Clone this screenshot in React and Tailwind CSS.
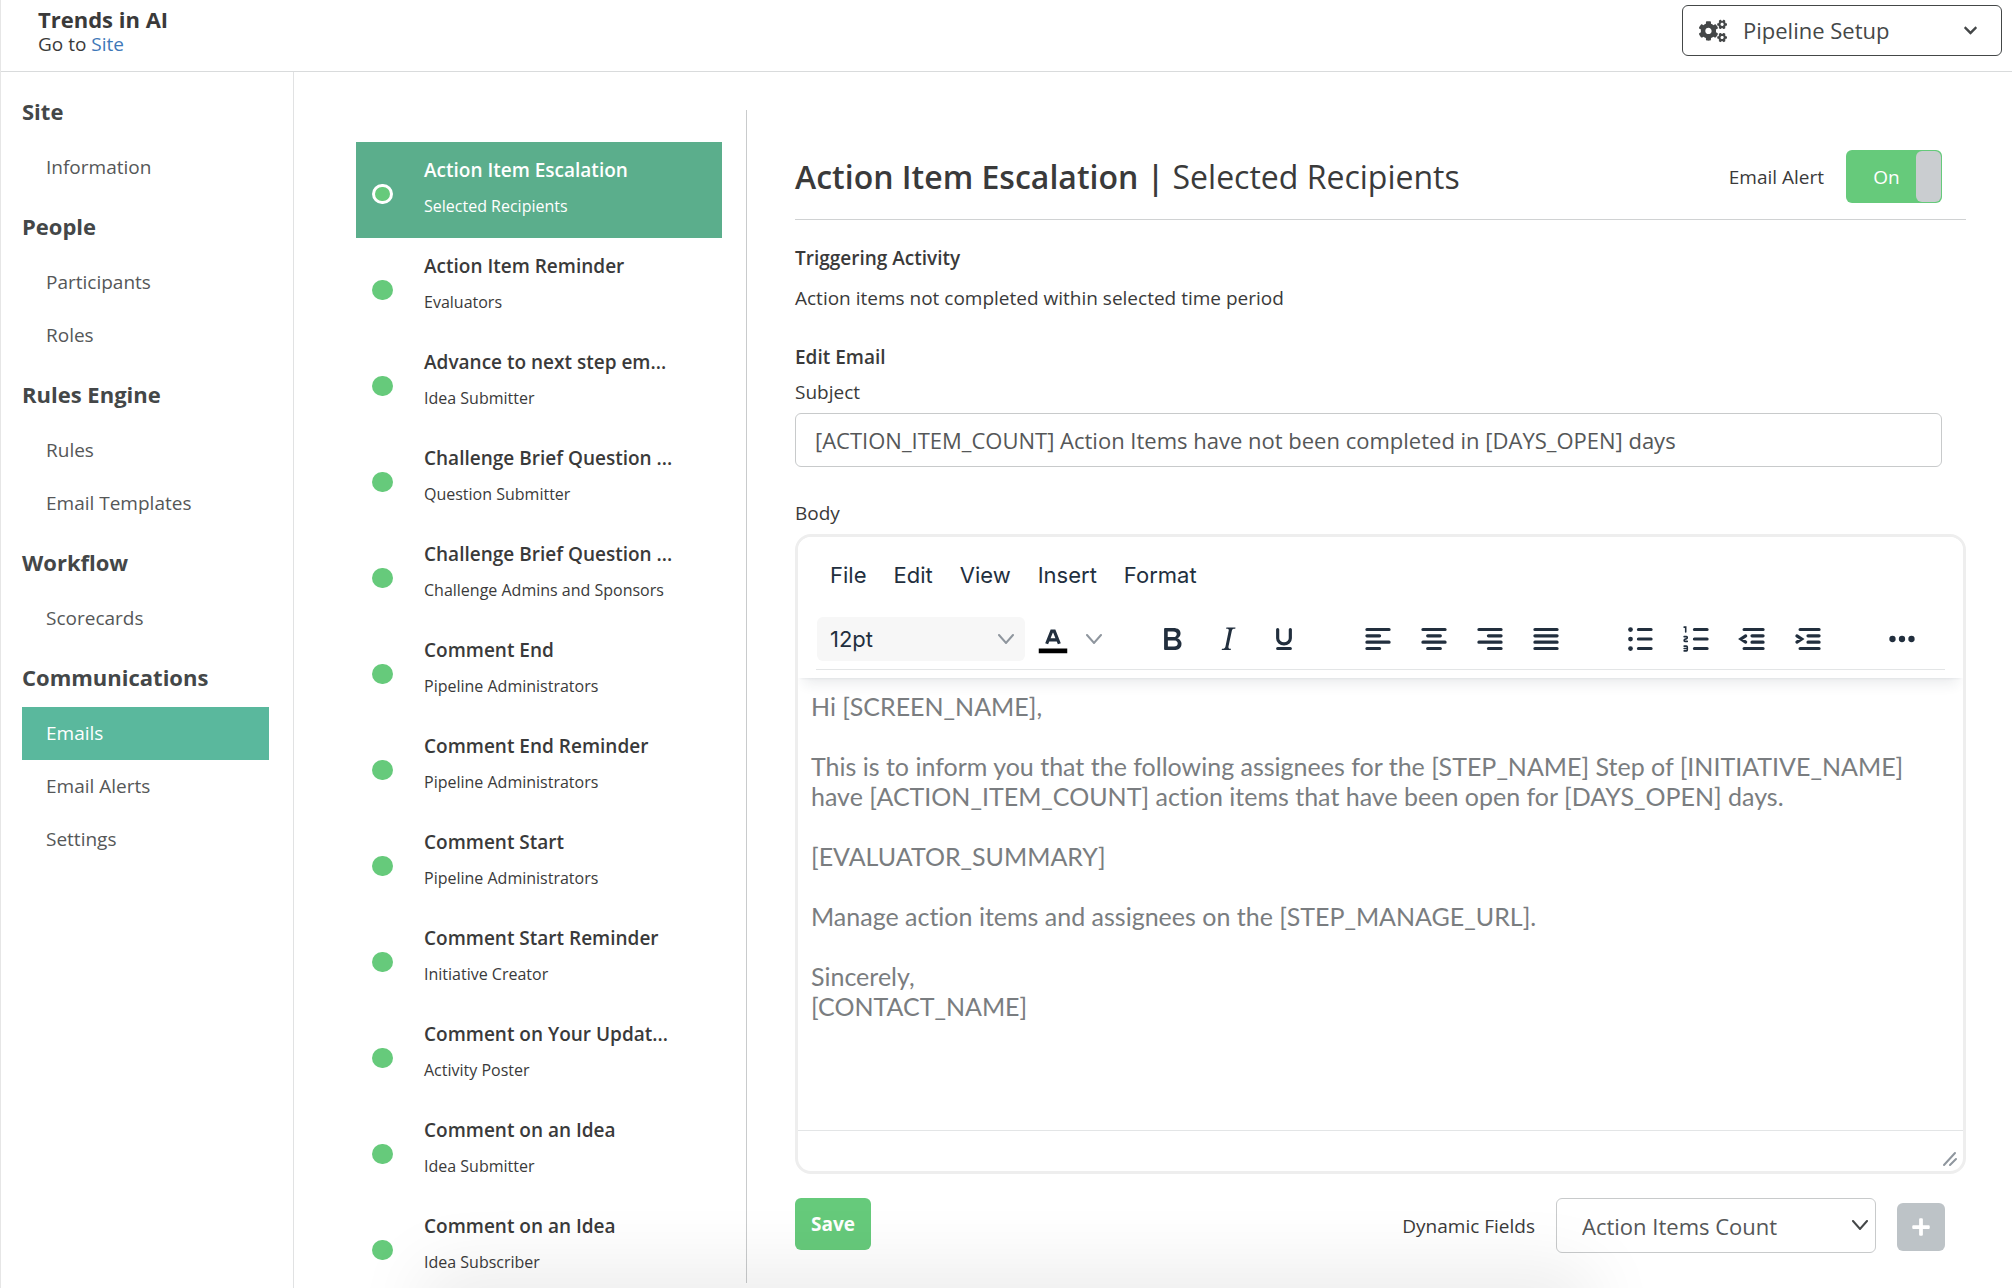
import { FaChevronDown, FaCogs, FaPlus } from "react-icons/fa";

const navSections = [
  { title: "Site", items: ["Information"] },
  { title: "People", items: ["Participants", "Roles"] },
  { title: "Rules Engine", items: ["Rules", "Email Templates"] },
  { title: "Workflow", items: ["Scorecards"] },
  { title: "Communications", items: ["Emails", "Email Alerts", "Settings"] },
];

const emails = [
  { title: "Action Item Escalation", recipient: "Selected Recipients" },
  { title: "Action Item Reminder", recipient: "Evaluators" },
  { title: "Advance to next step em...", recipient: "Idea Submitter" },
  { title: "Challenge Brief Question ...", recipient: "Question Submitter" },
  { title: "Challenge Brief Question ...", recipient: "Challenge Admins and Sponsors" },
  { title: "Comment End", recipient: "Pipeline Administrators" },
  { title: "Comment End Reminder", recipient: "Pipeline Administrators" },
  { title: "Comment Start", recipient: "Pipeline Administrators" },
  { title: "Comment Start Reminder", recipient: "Initiative Creator" },
  { title: "Comment on Your Updat...", recipient: "Activity Poster" },
  { title: "Comment on an Idea", recipient: "Idea Submitter" },
  { title: "Comment on an Idea", recipient: "Idea Subscriber" },
];

const body = `Hi [SCREEN_NAME],

This is to inform you that the following assignees for the [STEP_NAME] Step of [INITIATIVE_NAME] have [ACTION_ITEM_COUNT] action items that have been open for [DAYS_OPEN] days.

[EVALUATOR_SUMMARY]

Manage action items and assignees on the [STEP_MANAGE_URL].

Sincerely,
[CONTACT_NAME]`;

function Lines({ d }) {
  return <path d={d} fill="none" stroke="currentColor" strokeWidth="2" strokeLinecap="round" />;
}

const toolGroups = [
  [
    {
      label: "Bold",
      icon: (
        <path
          fillRule="evenodd"
          d="M7.8 19c-.3 0-.5 0-.6-.2l-.2-.5V5.7c0-.2 0-.4.2-.5l.6-.2h5c1.5 0 2.7.3 3.5 1 .7.6 1.1 1.4 1.1 2.5a3 3 0 0 1-.6 1.9c-.4.6-1 1-1.6 1.2.4.1.9.3 1.3.6s.8.7 1 1.2c.4.4.5 1 .5 1.6 0 1.3-.4 2.3-1.3 3-.8.7-2.1 1-3.8 1H7.8Zm5-8.3c.6 0 1.2-.1 1.6-.5.4-.3.6-.7.6-1.3 0-1.1-.8-1.7-2.3-1.7H9.3v3.5h3.4Zm.5 6c.7 0 1.3-.1 1.7-.4.4-.4.6-.9.6-1.5s-.2-1-.7-1.4c-.4-.3-1-.4-2-.4H9.4v3.8h4Z"
        />
      ),
    },
    {
      label: "Italic",
      icon: (
        <path d="m16.7 4.7-.1.9h-.3c-.6 0-1 0-1.4.3-.3.3-.4.6-.5 1.1l-2.1 9.8v.6c0 .5.4.8 1.4.8h.2l-.2.8H8l.2-.8h.2c1.1 0 1.8-.5 2-1.5l2-9.8.1-.5c0-.6-.4-.8-1.4-.8h-.3l.2-.9h5.8Z" />
      ),
    },
    { label: "Underline", icon: <Lines d="M8 6v5.500a4 3.600 0 0 0 8 0V6M8 18h8" /> },
  ],
  [
    { label: "Align left", icon: <Lines d="M5 6h14M5 10h8M5 14h14M5 18h8" /> },
    { label: "Align center", icon: <Lines d="M5 6h14M8 10h8M5 14h14M8 18h8" /> },
    { label: "Align right", icon: <Lines d="M5 6h14M11 10h8M5 14h14M11 18h8" /> },
    { label: "Justify", icon: <Lines d="M5 6h14M5 10h14M5 14h14M5 18h14" /> },
  ],
  [
    {
      label: "Bullet list",
      icon: (
        <>
          <Lines d="M11 6h8M11 12h8M11 18h8" />
          <circle cx="6" cy="6" r="1.5" />
          <circle cx="6" cy="12" r="1.5" />
          <circle cx="6" cy="18" r="1.5" />
        </>
      ),
    },
    {
      label: "Numbered list",
      icon: (
        <>
          <Lines d="M11 6h8M11 12h8M11 18h8" />
          <path
            d="M4.500 4.500h1v3M4.500 10.500H6q.5 0 .5.6 0 .5-.5.7l-1 .4q-.5.2-.5.8 0 .5.5.5h1.500M4.500 16.500H6q.5 0 .5.5v2q0 .5-.5.5H4.500M4.500 18H6.300"
            fill="none"
            stroke="currentColor"
            strokeLinecap="round"
          />
        </>
      ),
    },
    { label: "Decrease indent", icon: <Lines d="M7 6h12M12 10h7M12 14h7M7 18h12M8 10l-3 2 3 2" /> },
    { label: "Increase indent", icon: <Lines d="M7 6h12M12 10h7M12 14h7M7 18h12M5 10l3 2-3 2" /> },
  ],
  [
    {
      label: "More",
      icon: (
        <>
          <circle cx="6" cy="12" r="2" />
          <circle cx="12" cy="12" r="2" />
          <circle cx="18" cy="12" r="2" />
        </>
      ),
    },
  ],
];

function Chevron({ className }) {
  return (
    <svg viewBox="0 0 16 10" fill="none" stroke="currentColor" strokeWidth="2" strokeLinecap="round" className={className}>
      <path d="M1 1l7 8 7-8" />
    </svg>
  );
}

function Header() {
  return (
    <header className="flex h-[72px] shrink-0 items-start justify-between border-b border-[#d9dbdc] pr-[10px] pl-[37px]">
      <div className="pt-[5px]">
        <h1 className="text-[22px] leading-[28px] font-bold text-[#3a3a3a]">Trends in AI</h1>
        <p className="text-[19px] leading-[22px]">
          Go to <a href="#site" className="text-[#3e78b8]">Site</a>
        </p>
      </div>
      <button className="mt-[5px] flex h-[51px] w-80 items-center rounded-md border border-[#444748] pr-[23px] pl-4 text-[22px] text-[#444748]">
        <FaCogs className="size-7" />
        <span className="ml-4">Pipeline Setup</span>
        <FaChevronDown className="ml-auto size-[15px]" />
      </button>
    </header>
  );
}

function Sidebar() {
  return (
    <nav className="w-[293px] shrink-0 border-r border-[#e1e2e3] pt-[7px] pr-6 pl-[21px]">
      {navSections.map((section) => (
        <div key={section.title}>
          <h2 className="pt-[17px] pb-[15px] text-[22px] leading-[30px] font-bold text-[#444748]">{section.title}</h2>
          <ul>
            {section.items.map((item) => (
              <li key={item}>
                <a
                  href="#nav"
                  className={
                    item === "Emails"
                      ? "block bg-[#5ab89d] pl-6 text-[19px] leading-[53px] text-white"
                      : "block pl-6 text-[19px] leading-[53px] text-[#555758]"
                  }
                >
                  {item}
                </a>
              </li>
            ))}
          </ul>
        </div>
      ))}
    </nav>
  );
}

function EmailList() {
  return (
    <section className="mt-[38px] mb-[5px] ml-[62px] w-[391px] shrink-0 overflow-y-auto border-r border-[#c9cbcc] pt-8 pr-6 [scrollbar-width:none]">
      {emails.map((email, i) => (
        <a
          key={i}
          href="#email"
          className={i === 0 ? "flex h-24 bg-[#5bae8c] pl-4 text-white" : "flex h-24 pl-4 text-[#3a3a3a]"}
        >
          <span
            className={
              i === 0
                ? "mt-[42px] h-5 w-[21px] shrink-0 rounded-full border-3 border-white bg-[#66ca7b]"
                : "mt-[42px] h-5 w-[21px] shrink-0 rounded-full bg-[#66ca7b]"
            }
          />
          <span className="ml-[31px] pt-[14px]">
            <span className="block text-[19px] leading-[28px] font-semibold whitespace-nowrap">{email.title}</span>
            <span className="mt-2 block text-[16px] leading-[28px]">{email.recipient}</span>
          </span>
        </a>
      ))}
    </section>
  );
}

function Editor() {
  return (
    <div className="mt-[7px] flex h-[640px] flex-col overflow-hidden rounded-2xl border-3 border-[#eeeeee] font-[Inter,sans-serif] text-[#222f3e]">
      <div className="relative z-10 h-[141px] bg-white px-[18px] shadow-[0_3px_3px_-3px_rgba(34,47,62,0.12),0_12px_12px_-6px_rgba(34,47,62,0.09)]">
        <div className="flex h-[75px] items-center gap-[27px] pl-[14px] text-[22px]">
          <button>File</button>
          <button>Edit</button>
          <button>View</button>
          <button>Insert</button>
          <button>Format</button>
        </div>
        <div className="flex h-[58px] items-start border-b border-[#e3e5e6]">
          <button className="mt-[5px] ml-px flex h-11 w-52 items-center justify-between rounded-md bg-[#f7f7f7] pr-[11px] pl-[13px] text-[22px]">
            12pt
            <Chevron className="h-[10px] w-4 text-[#8f969e]" />
          </button>
          <button aria-label="Text color" className="flex h-[54px] w-14 items-center justify-center">
            <svg viewBox="0 0 24 24" fill="currentColor" className="size-[38px]">
              <path fill="#000" d="M3 18h18v3H3z" />
              <path d="M8 15 11.200 7h1.600L16 15M9.500 12.500h5" fill="none" stroke="currentColor" strokeWidth="2" />
            </svg>
          </button>
          <button aria-label="Text color menu" className="flex h-[54px] w-[25px] items-center justify-center">
            <Chevron className="h-[10px] w-4 text-[#8f969e]" />
          </button>
          {toolGroups.map((group, i) => (
            <div key={i} className="ml-[38px] flex">
              {group.map((tool) => (
                <button key={tool.label} aria-label={tool.label} className="flex h-[54px] w-14 items-center justify-center">
                  <svg viewBox="0 0 24 24" fill="currentColor" className="size-[38px]">
                    {tool.icon}
                  </svg>
                </button>
              ))}
            </div>
          ))}
        </div>
      </div>
      <textarea
        aria-label="Body"
        defaultValue={body}
        className="w-full flex-1 resize-none px-[13px] pt-[13px] font-[Lato,sans-serif] text-[25px] leading-[30px] text-[#7a7d80] outline-none [font-variant-ligatures:none]"
      />
      <div className="flex h-[41px] items-end justify-end border-t border-[#e3e5e6] pr-[5px] pb-1">
        <svg viewBox="0 0 16 16" fill="none" stroke="#8f969e" strokeWidth="2" strokeLinecap="round" className="size-4">
          <path d="M2 14 13 2M8 14l6-6" />
        </svg>
      </div>
    </div>
  );
}

function EmailForm() {
  return (
    <main className="min-w-0 flex-1 pt-[78px] pr-[46px] pl-12 text-[19px] leading-[28px]">
      <div className="flex items-center justify-between border-b border-[#d0d2d3] pr-6 pb-4">
        <h2 className="text-[32px] leading-[44px] font-semibold">
          Action Item Escalation | <span className="font-normal">Selected Recipients</span>
        </h2>
        <label className="flex items-center gap-[22px]">
          Email Alert
          <input type="checkbox" role="switch" defaultChecked className="sr-only" />
          <span className="flex h-[53px] w-24 items-stretch rounded-md bg-[#66ca7b] p-px text-white">
            <span className="flex-1 self-center pl-[10px] text-center">On</span>
            <span className="w-[25px] rounded-md bg-[#cacdd0]" />
          </span>
        </label>
      </div>

      <h3 className="mt-6 font-semibold">Triggering Activity</h3>
      <p className="mt-3">Action items not completed within selected time period</p>

      <h3 className="mt-[31px] font-semibold">Edit Email</h3>
      <label htmlFor="subject" className="mt-[7px] block">Subject</label>
      <div className="mt-[7px] pr-6">
        <input
          id="subject"
          type="text"
          defaultValue="[ACTION_ITEM_COUNT] Action Items have not been completed in [DAYS_OPEN] days"
          className="h-[54px] w-full rounded-md border border-[#c8cacb] px-[19px] text-[22px] text-[#555758]"
        />
      </div>

      <p className="mt-8">Body</p>
      <Editor />

      <div className="mt-6 flex items-start pr-[21px]">
        <button className="h-[52px] w-[76px] rounded-md bg-[#66ca7b] font-bold text-white">Save</button>
        <label htmlFor="fields" className="mt-[14px] ml-auto">Dynamic Fields</label>
        <div className="relative ml-[21px]">
          <select
            id="fields"
            className="h-[55px] w-80 appearance-none rounded-md border border-[#c8cacb] bg-transparent pl-[25px] text-[22px] text-[#555758]"
          >
            <option>Action Items Count</option>
          </select>
          <Chevron className="pointer-events-none absolute top-[22px] right-[7px] h-[10px] w-[18px] text-[#444748]" />
        </div>
        <button aria-label="Add field" className="mt-[5px] ml-[21px] flex size-12 items-center justify-center rounded-md bg-[#bdc3c7] text-white">
          <FaPlus className="size-5" />
        </button>
      </div>
    </main>
  );
}

function App() {
  return (
    <div className="relative flex h-screen flex-col overflow-hidden border-l border-[#e6e6e6] bg-white font-['Open_Sans',sans-serif] text-[#3a3a3a]">
      <Header />
      <div className="flex min-h-0 flex-1">
        <Sidebar />
        <EmailList />
        <EmailForm />
      </div>
      <div className="pointer-events-none absolute inset-x-[440px] top-full h-10 shadow-[0_0_70px_20px_rgba(0,0,0,0.08)]" />
    </div>
  );
}

export default App;
